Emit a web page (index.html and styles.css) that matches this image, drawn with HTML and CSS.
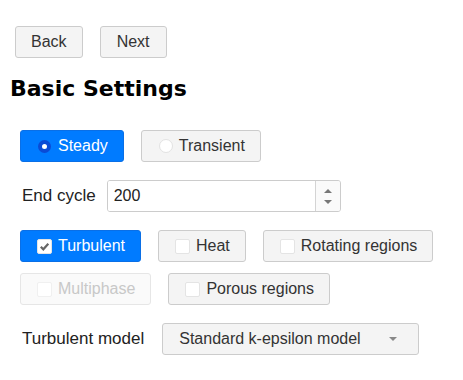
FILE: index.html
```html
<!DOCTYPE html>
<html>
<head>
    <title>Basic Settings</title>
    <link rel="stylesheet" href="styles.css">
</head>
<body>
    <div class="toolbar">
        <button class="btn btn-nav">Back</button>
        <button class="btn btn-nav">Next</button>
    </div>

    <h1 class="title">Basic Settings</h1>

    <div class="form">
        <div class="choices">
            <label class="btn btn-active"><span class="radio radio-on"></span>Steady</label>
            <label class="btn"><span class="radio"></span>Transient</label>
        </div>

        <div class="field">
            <label class="field-label" for="end-cycle">End cycle</label>
            <div class="number">
                <input type="text" id="end-cycle" class="number-input" value="200">
                <span class="spinner">
                    <span class="arrow-up"></span>
                    <span class="arrow-down"></span>
                </span>
            </div>
        </div>

        <div class="choices">
            <label class="btn btn-active">
                <span class="check">
                    <svg width="13" height="13" viewBox="0 0 13 13"><path d="M2.8 6.8 L5.3 9.3 L10.3 3.8" fill="none" stroke="#666" stroke-width="2.2"/></svg>
                </span>Turbulent
            </label>
            <label class="btn"><span class="check"></span>Heat</label>
            <label class="btn"><span class="check"></span>Rotating regions</label>
            <label class="btn btn-disabled"><span class="check"></span>Multiphase</label>
            <label class="btn"><span class="check"></span>Porous regions</label>
        </div>

        <div class="field">
            <label class="field-label field-label-wide">Turbulent model</label>
            <div class="select">
                Standard k-epsilon model
                <span class="caret"></span>
            </div>
        </div>
    </div>
</body>
</html>
```

FILE: styles.css
```css
body {
    margin: 0;
    font-family: "Liberation Sans", Arial, sans-serif;
    color: #222;
    background-color: #fff;
}

.toolbar {
    display: flex;
    gap: 17px;
    padding: 26px 0 0 15px;
}

.btn {
    display: inline-flex;
    align-items: center;
    gap: 6px;
    box-sizing: border-box;
    height: 32px;
    padding: 0 15px;
    border: 1px solid #ccc;
    border-radius: 3px;
    background-color: #f4f4f4;
    color: #333;
    font-family: "Liberation Sans", Arial, sans-serif;
    font-size: 16px;
    line-height: 22px;
}

.btn-nav {
    justify-content: center;
    min-width: 67px;
}

.btn-active {
    background-color: #007bff;
    border-color: #0a6fe6;
    color: #fff;
}

.btn-disabled {
    background-color: #fafafa;
    border-color: #e6e6e6;
    color: #c8c8c8;
}

.title {
    margin: 16px 0 0 10px;
    font-family: "DejaVu Sans", sans-serif;
    font-size: 22px;
    font-weight: bold;
    line-height: 30px;
    color: #000;
}

.form {
    padding: 26px 0 0 20px;
}

.choices {
    display: flex;
    flex-wrap: wrap;
    gap: 11px 17px;
    margin-bottom: 18px;
}

.radio {
    box-sizing: border-box;
    width: 14px;
    height: 14px;
    margin-left: 2px;
    border: 1px solid #e2e2e2;
    border-radius: 50%;
    background-color: #fff;
}

.radio-on {
    width: 13px;
    height: 13px;
    margin-right: 1px;
    border: 4px solid #0a4bd6;
}

.check {
    display: flex;
    align-items: center;
    justify-content: center;
    box-sizing: border-box;
    width: 15px;
    height: 15px;
    margin-left: 1px;
    border: 1px solid #e4e4e4;
    border-radius: 2px;
    background-color: #fff;
}

.btn-disabled .check {
    border-color: #f0f0f0;
}

.field {
    display: flex;
    align-items: center;
    margin-bottom: 18px;
}

.field-label {
    margin: 0 11px 0 2px;
    font-size: 17px;
    color: #222;
}

.field-label-wide {
    margin-right: 18px;
}

.number {
    display: flex;
    box-sizing: border-box;
    width: 234px;
    height: 32px;
    border: 1px solid #ccc;
    border-radius: 3px;
    overflow: hidden;
}

.number-input {
    flex: 1;
    min-width: 0;
    padding: 0 6px;
    border: none;
    outline: none;
    font-family: "Liberation Sans", Arial, sans-serif;
    font-size: 16px;
    color: #222;
}

.spinner {
    display: flex;
    flex-direction: column;
    align-items: center;
    justify-content: center;
    gap: 7px;
    width: 24px;
    border-left: 1px solid #d4d4d4;
    background-color: #fafafa;
}

.arrow-up {
    border-left: 4px solid transparent;
    border-right: 4px solid transparent;
    border-bottom: 4px solid #777;
}

.arrow-down {
    border-left: 4px solid transparent;
    border-right: 4px solid transparent;
    border-top: 4px solid #777;
}

.select {
    display: flex;
    align-items: center;
    justify-content: space-between;
    box-sizing: border-box;
    width: 257px;
    height: 32px;
    padding: 0 21px 0 16px;
    border: 1px solid #ccc;
    border-radius: 3px;
    background-color: #f4f4f4;
    color: #333;
    font-size: 16px;
}

.caret {
    border-left: 4px solid transparent;
    border-right: 4px solid transparent;
    border-top: 4px solid #888;
}
```
